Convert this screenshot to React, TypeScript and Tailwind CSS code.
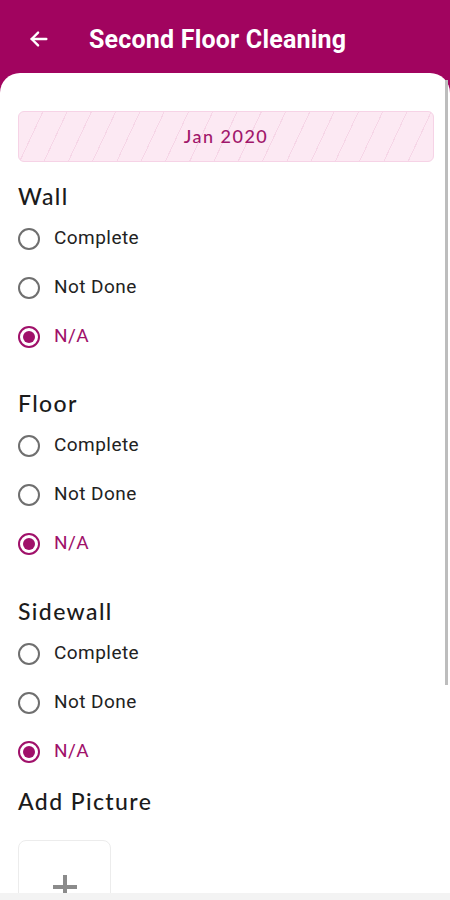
import React from "react";

const Radio = ({ label, selected }: { label: string; selected?: boolean }) => (
  <div className="flex h-[49px] items-center">
    <div
      className={
        "flex h-[22px] w-[22px] items-center justify-center rounded-full border-2 " +
        (selected ? "border-[#a0106a]" : "border-[#6f6f6f]")
      }
    >
      {selected && <div className="h-[12px] w-[12px] rounded-full bg-[#a0106a]" />}
    </div>
    <span
      className={
        "ml-[14px] text-[19px] tracking-[0.45px] " + (selected ? "text-[#a0106a]" : "text-[#222]")
      }
      style={{ fontFamily: "Roboto, 'Liberation Sans', sans-serif" }}
    >
      {label}
    </span>
  </div>
);

const Section = ({ title, className }: { title: string; className?: string }) => (
  <div className={className}>
    <div
      className="h-[28px] text-[23px] font-medium leading-[28px] tracking-[1.4px] text-[#1b1b1b]"
      style={{ fontFamily: "Lato, 'Noto Sans', sans-serif" }}
    >
      {title}
    </div>
    <div className="mt-[4px]">
      <Radio label="Complete" />
      <Radio label="Not Done" />
      <Radio label="N/A" selected />
    </div>
  </div>
);

export default function App() {
  return (
    <div className="relative h-[900px] w-[450px] overflow-hidden bg-[#a1045f]">
      <div className="flex h-[73px] items-start pt-[26px]">
        <div className="ml-[26px] flex h-[26px] w-[26px] items-center justify-center">
          <svg width="22" height="22" viewBox="0 0 24 24" fill="none" stroke="white" strokeWidth="2.6" strokeLinecap="round" strokeLinejoin="round">
            <path d="M20 12H4" />
            <path d="M11 5l-7 7 7 7" />
          </svg>
        </div>
        <div
          className="ml-[37px] text-[25px] font-bold leading-[28px] tracking-[0.2px] text-white"
          style={{ fontFamily: "Roboto, 'Liberation Sans', sans-serif" }}
        >
          Second Floor Cleaning
        </div>
      </div>
      <div className="h-[827px] rounded-t-[20px] bg-white px-[18px] pt-[38px]">
        <div
          className="flex h-[51px] w-[416px] items-center justify-center rounded-[6px] border border-[#f6d3e6] bg-[#fce9f3] bg-[repeating-linear-gradient(115deg,transparent_0px,transparent_21px,#f6d6e7_21px,#f6d6e7_22px)]"
        >
          <span
            className="text-[18px] font-medium tracking-[1.5px] text-[#a1176b]"
            style={{ fontFamily: "Lato, 'Noto Sans', sans-serif" }}
          >
            Jan 2020
          </span>
        </div>
        <Section title="Wall" className="mt-[20px]" />
        <Section title="Floor" className="mt-[28px]" />
        <Section title="Sidewall" className="mt-[29px]" />
        <div
          className="mt-[11px] h-[28px] text-[23px] font-medium leading-[28px] tracking-[1.4px] text-[#1b1b1b]"
          style={{ fontFamily: "Lato, 'Noto Sans', sans-serif" }}
        >
          Add Picture
        </div>
        <div className="mt-[25px] flex h-[93px] w-[93px] items-center justify-center rounded-[8px] border border-[#ececec]">
          <svg width="26" height="26" viewBox="0 0 26 26">
            <rect x="11" y="1" width="4" height="24" fill="#8b8b8b" />
            <rect x="1" y="11" width="24" height="4" fill="#8b8b8b" />
          </svg>
        </div>
      </div>
      <div className="absolute right-[2px] top-[80px] h-[605px] w-[3px] bg-[#bdbdbd]" />
      <div className="absolute bottom-0 left-0 h-[7px] w-full bg-[#f3f3f3]" />
    </div>
  );
}
